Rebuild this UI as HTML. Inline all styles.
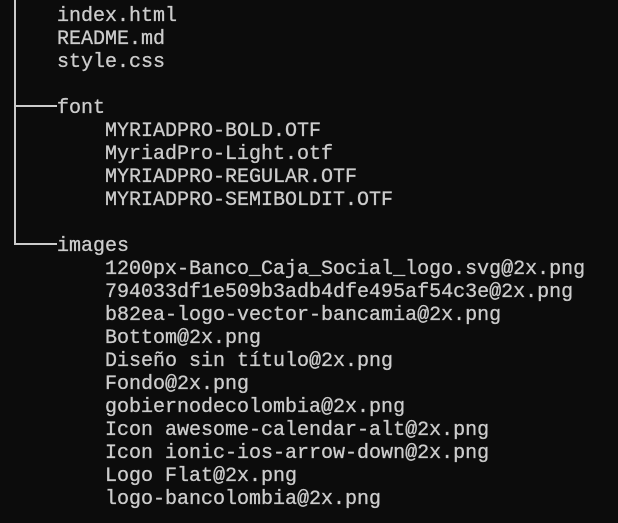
<!DOCTYPE html>
<html><head><style>
html,body{margin:0;padding:0;background:#0c0c0c;width:618px;height:523px;overflow:hidden}
pre{position:absolute;left:9px;top:5px;margin:0;font:20px/23px "Liberation Mono",monospace;color:#cccccc;-webkit-text-stroke:0.3px #cccccc}
.l{position:absolute;background:#cccccc}
</style></head><body>
<div class="l" style="left:14px;top:0;width:2px;height:245px"></div>
<div class="l" style="left:14px;top:105px;width:43px;height:2px"></div>
<div class="l" style="left:14px;top:243px;width:43px;height:2px"></div>
<pre>    index.html
    README.md
    style.css

    font
        MYRIADPRO-BOLD.OTF
        MyriadPro-Light.otf
        MYRIADPRO-REGULAR.OTF
        MYRIADPRO-SEMIBOLDIT.OTF

    images
        1200px-Banco_Caja_Social_logo.svg@2x.png
        794033df1e509b3adb4dfe495af54c3e@2x.png
        b82ea-logo-vector-bancamia@2x.png
        Bottom@2x.png
        Diseño sin título@2x.png
        Fondo@2x.png
        gobiernodecolombia@2x.png
        Icon awesome-calendar-alt@2x.png
        Icon ionic-ios-arrow-down@2x.png
        Logo Flat@2x.png
        logo-bancolombia@2x.png</pre>
</body></html>
